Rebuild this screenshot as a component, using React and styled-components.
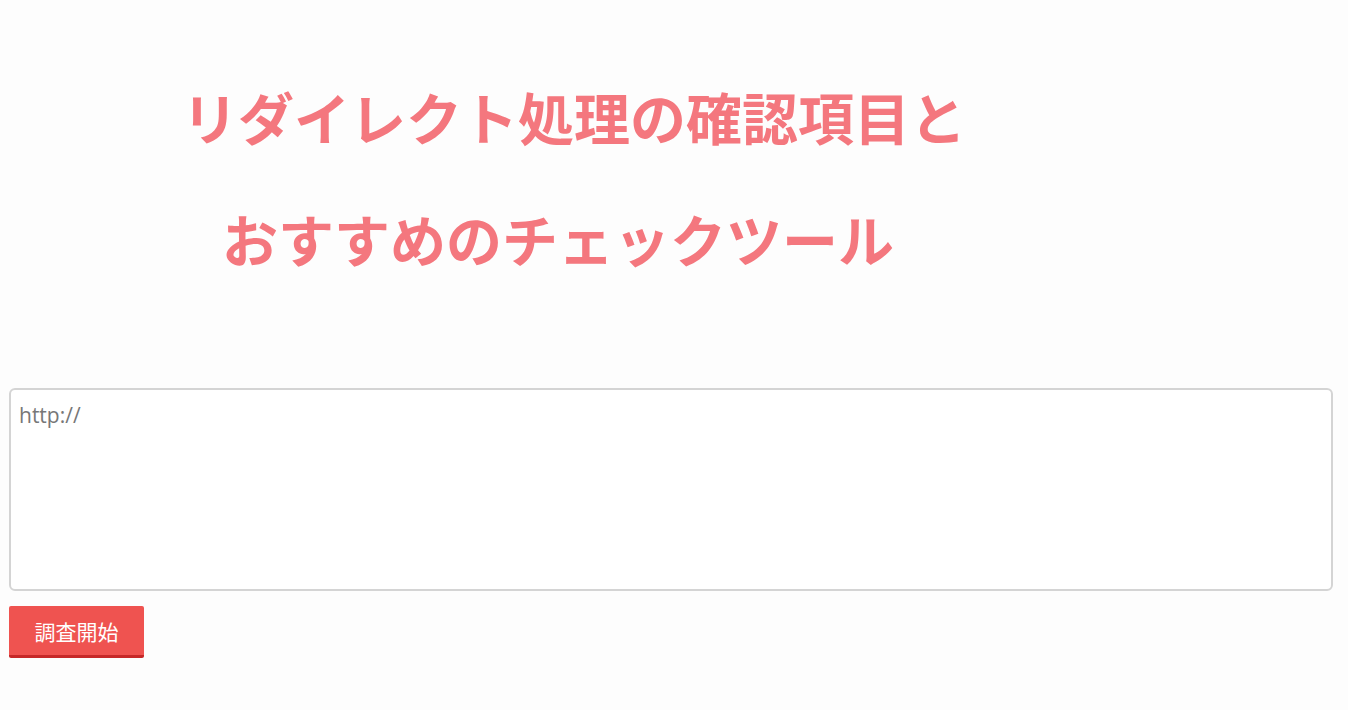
import React, { useState } from 'react';
import styled, { createGlobalStyle } from 'styled-components';

const GlobalStyle = createGlobalStyle`
    html, body {
        margin: 0;
        padding: 0;
        background: #fdfdfd;
        font-family: "Open Sans", "Noto Sans CJK JP", sans-serif;
    }
`

const Wrapper = styled.div`
    padding: 0 15px 0 9px;
    width: 1348px;
    box-sizing: border-box;
`

const Title = styled.h1`
    margin: 0;
    padding-top: 55px;
    width: 1130px;
    display: flex;
    flex-direction: column;
    align-items: center;
    font-family: "Noto Sans CJK JP", sans-serif;
    font-size: 56px;
    font-weight: 700;
    line-height: 122px;
    color: #f4777e;
`

const TitleLine = styled.span`
    display: block;
    padding-right: ${(p) => p.$shift || 0}px;
`

const Form = styled.div`
    margin-top: 89px;
    display: flex;
    flex-direction: column;
    align-items: flex-start;
`

const UrlInput = styled.textarea`
    display: block;
    width: 100%;
    height: 203px;
    box-sizing: border-box;
    padding: 11px 8px;
    font-family: "Open Sans", sans-serif;
    font-size: 21px;
    color: #777;
    background: #fff;
    border: 2px solid #d4d4d4;
    border-radius: 6px;
    resize: none;
    outline: none;
`

const StartButton = styled.button`
    margin-top: 15px;
    width: 135px;
    height: 52px;
    padding: 0;
    font-family: "Noto Sans CJK JP", sans-serif;
    font-size: 21px;
    color: #fff;
    background: #ef5350;
    border: 0;
    border-bottom: 3px solid #c62828;
    border-radius: 2px;
    cursor: pointer;
`

function App() {
    const [url, setUrl] = useState('http://');

    return (
        <Wrapper>
            <GlobalStyle />
            <Title>
                <TitleLine>リダイレクト処理の確認項目と</TitleLine>
                <TitleLine $shift={32}>おすすめのチェックツール</TitleLine>
            </Title>
            <Form>
                <UrlInput value={url} onChange={(e) => setUrl(e.target.value)} />
                <StartButton type="submit">調査開始</StartButton>
            </Form>
        </Wrapper>
    )
}

export default App
